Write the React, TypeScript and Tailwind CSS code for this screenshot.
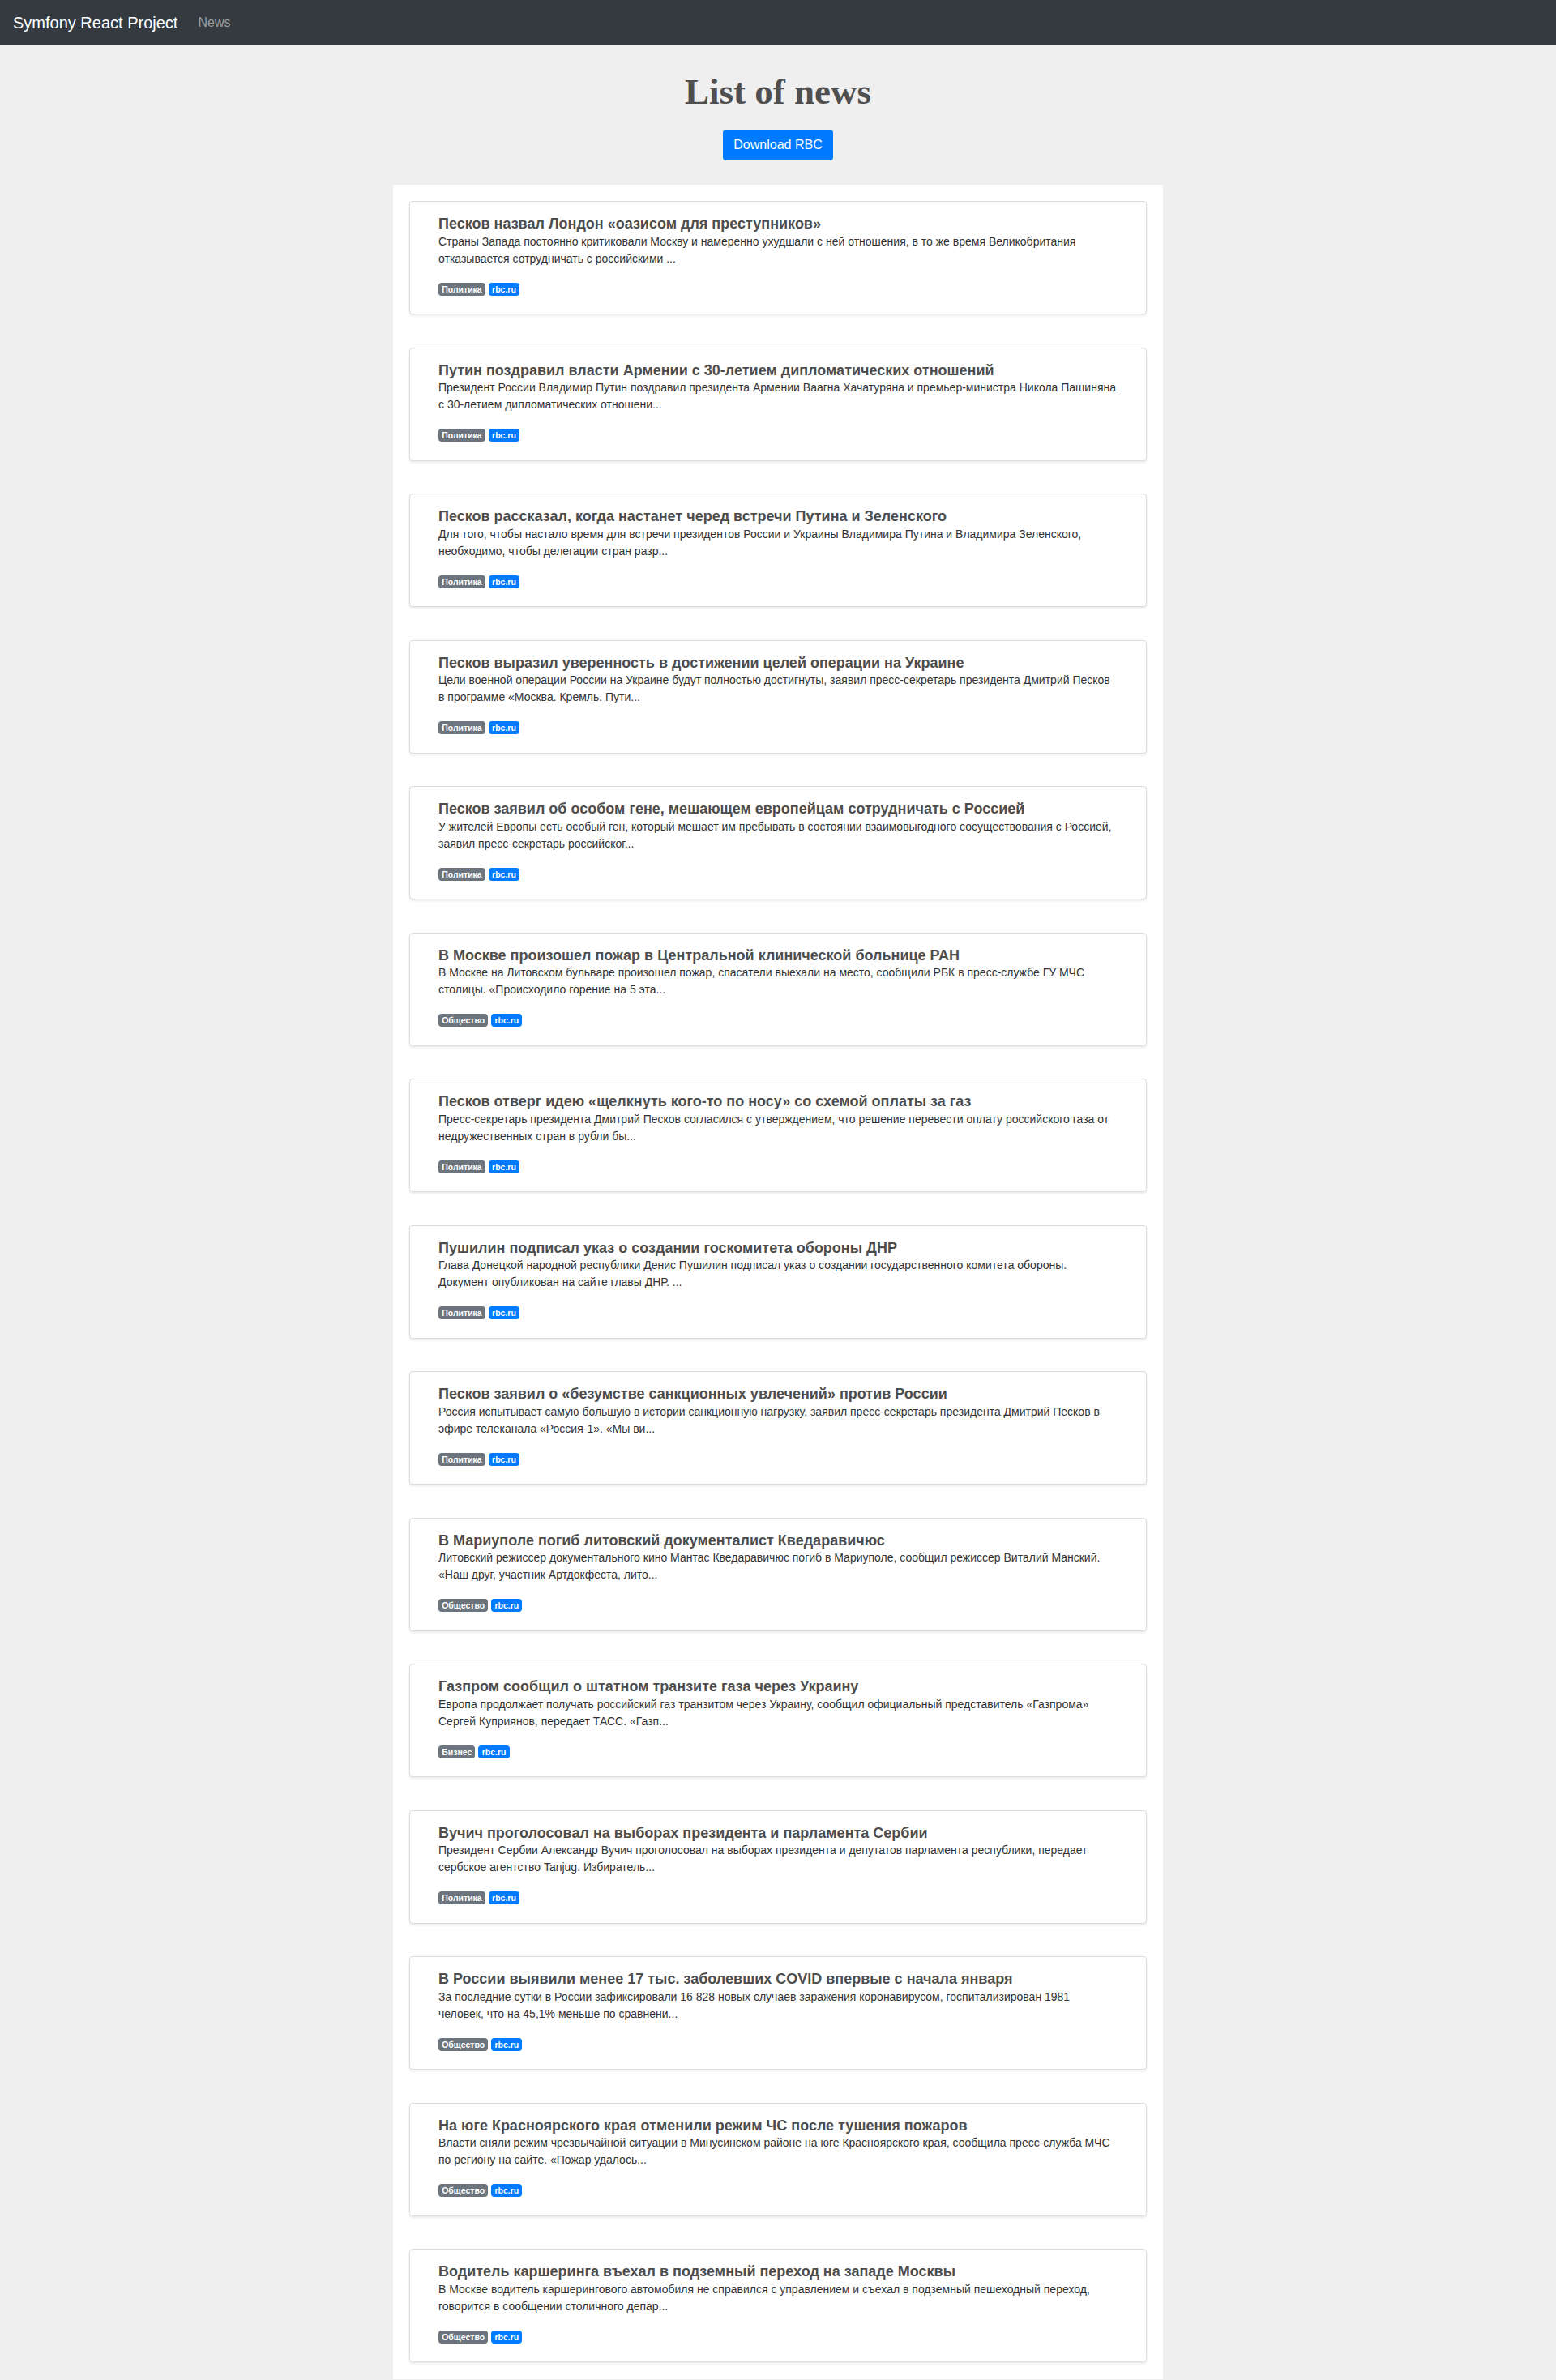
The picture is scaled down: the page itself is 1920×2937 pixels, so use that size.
import React from 'react';

interface NewsItem {
  title: string;
  description: string;
  category: string;
}

const news: NewsItem[] = [
  {
    title: 'Песков назвал Лондон «оазисом для преступников»',
    description:
      'Страны Запада постоянно критиковали Москву и намеренно ухудшали с ней отношения, в то же время Великобритания отказывается сотрудничать с российскими ...',
    category: 'Политика',
  },
  {
    title: 'Путин поздравил власти Армении с 30-летием дипломатических отношений',
    description:
      'Президент России Владимир Путин поздравил президента Армении Ваагна Хачатуряна и премьер-министра Никола Пашиняна с 30-летием дипломатических отношени...',
    category: 'Политика',
  },
  {
    title: 'Песков рассказал, когда настанет черед встречи Путина и Зеленского',
    description:
      'Для того, чтобы настало время для встречи президентов России и Украины Владимира Путина и Владимира Зеленского, необходимо, чтобы делегации стран разр...',
    category: 'Политика',
  },
  {
    title: 'Песков выразил уверенность в достижении целей операции на Украине',
    description:
      'Цели военной операции России на Украине будут полностью достигнуты, заявил пресс-секретарь президента Дмитрий Песков в программе «Москва. Кремль. Пути...',
    category: 'Политика',
  },
  {
    title: 'Песков заявил об особом гене, мешающем европейцам сотрудничать с Россией',
    description:
      'У жителей Европы есть особый ген, который мешает им пребывать в состоянии взаимовыгодного сосуществования с Россией, заявил пресс-секретарь российског...',
    category: 'Политика',
  },
  {
    title: 'В Москве произошел пожар в Центральной клинической больнице РАН',
    description:
      'В Москве на Литовском бульваре произошел пожар, спасатели выехали на место, сообщили РБК в пресс-службе ГУ МЧС столицы. «Происходило горение на 5 эта...',
    category: 'Общество',
  },
  {
    title: 'Песков отверг идею «щелкнуть кого-то по носу» со схемой оплаты за газ',
    description:
      'Пресс-секретарь президента Дмитрий Песков согласился с утверждением, что решение перевести оплату российского газа от недружественных стран в рубли бы...',
    category: 'Политика',
  },
  {
    title: 'Пушилин подписал указ о создании госкомитета обороны ДНР',
    description:
      'Глава Донецкой народной республики Денис Пушилин подписал указ о создании государственного комитета обороны. Документ опубликован на сайте главы ДНР. ...',
    category: 'Политика',
  },
  {
    title: 'Песков заявил о «безумстве санкционных увлечений» против России',
    description:
      'Россия испытывает самую большую в истории санкционную нагрузку, заявил пресс-секретарь президента Дмитрий Песков в эфире телеканала «Россия-1». «Мы ви...',
    category: 'Политика',
  },
  {
    title: 'В Мариуполе погиб литовский документалист Кведаравичюс',
    description:
      'Литовский режиссер документального кино Мантас Кведаравичюс погиб в Мариуполе, сообщил режиссер Виталий Манский. «Наш друг, участник Артдокфеста, лито...',
    category: 'Общество',
  },
  {
    title: 'Газпром сообщил о штатном транзите газа через Украину',
    description:
      'Европа продолжает получать российский газ транзитом через Украину, сообщил официальный представитель «Газпрома» Сергей Куприянов, передает ТАСС. «Газп...',
    category: 'Бизнес',
  },
  {
    title: 'Вучич проголосовал на выборах президента и парламента Сербии',
    description:
      'Президент Сербии Александр Вучич проголосовал на выборах президента и депутатов парламента республики, передает сербское агентство Tanjug. Избиратель...',
    category: 'Политика',
  },
  {
    title: 'В России выявили менее 17 тыс. заболевших COVID впервые с начала января',
    description:
      'За последние сутки в России зафиксировали 16 828 новых случаев заражения коронавирусом, госпитализирован 1981 человек, что на 45,1% меньше по сравнени...',
    category: 'Общество',
  },
  {
    title: 'На юге Красноярского края отменили режим ЧС после тушения пожаров',
    description:
      'Власти сняли режим чрезвычайной ситуации в Минусинском районе на юге Красноярского края, сообщила пресс-служба МЧС по региону на сайте. «Пожар удалось...',
    category: 'Общество',
  },
  {
    title: 'Водитель каршеринга въехал в подземный переход на западе Москвы',
    description:
      'В Москве водитель каршерингового автомобиля не справился с управлением и съехал в подземный пешеходный переход, говорится в сообщении столичного депар...',
    category: 'Общество',
  },
];

const NewsCard: React.FC<{ item: NewsItem }> = ({ item }) => (
  <div className="h-[140px] rounded border border-[#dcdcdc] bg-white px-[35px] pt-[17px] shadow-[0_2px_3px_rgba(0,0,0,0.08)]">
    <h5 className="text-[18px] font-bold leading-[21.6px] text-[#4d4d4d]">{item.title}</h5>
    <p className="text-[14px] leading-[21px] text-[#333]">{item.description}</p>
    <div className="mt-[19.4px] flex gap-[4px]">
      <span className="rounded bg-[#6c757d] px-[4.2px] py-[2.6px] text-[10.5px] font-bold leading-none text-white">
        {item.category}
      </span>
      <span className="rounded bg-[#007bff] px-[4.2px] py-[2.6px] text-[10.5px] font-bold leading-none text-white">
        rbc.ru
      </span>
    </div>
  </div>
);

export default function App() {
  return (
    <div className="min-h-screen bg-[#efefef] font-['Liberation_Sans',Arial,sans-serif]">
      <nav className="flex h-14 items-center bg-[#343a40] px-4">
        <span className="text-[20px] leading-[30px] text-white">Symfony React Project</span>
        <span className="ml-[25px] text-[16px] text-white/50">News</span>
      </nav>

      <main className="flex flex-col items-center pt-[30px]">
        <h1 className="font-['Liberation_Serif','Times_New_Roman',serif] text-[45px] font-bold leading-[54px] text-[#4f4f4f]">
          List of news
        </h1>
        <button className="mt-[20px] h-[38px] rounded bg-[#007bff] px-[13px] text-[16px] text-white">
          Download RBC
        </button>

        <div className="mt-[30px] flex w-[950px] flex-col gap-[40.5px] bg-white px-5 pb-[21px] pt-5">
          {news.map((item, i) => (
            <NewsCard key={i} item={item} />
          ))}
        </div>
      </main>
    </div>
  );
}
